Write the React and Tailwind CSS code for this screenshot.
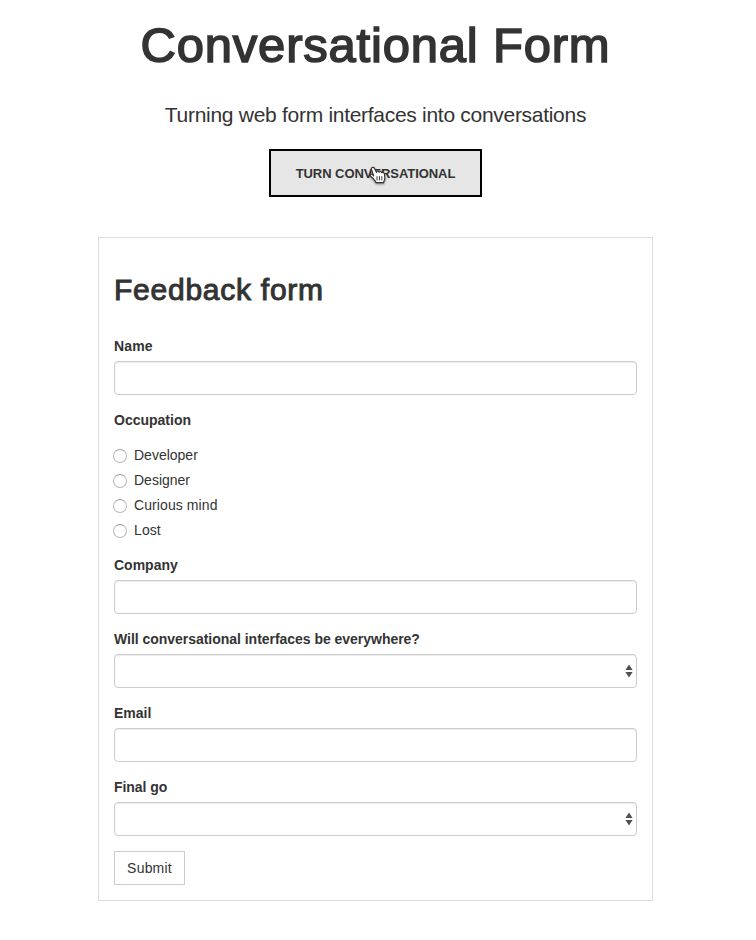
const label = "block w-fit whitespace-nowrap text-[14px] leading-5 font-bold";
const field =
  "mt-[5px] block h-[34px] w-full appearance-none rounded-[4px] border border-[#ccc] bg-white px-3 shadow-[inset_0_1px_1px_rgba(0,0,0,0.075)] outline-none";

function TextField({ name, tracking = "" }) {
  return (
    <div className="mb-[15px]">
      <label className={`${label} ${tracking}`}>{name}</label>
      <input type="text" aria-label={name} className={field} />
    </div>
  );
}

function SelectField({ name, tracking = "" }) {
  return (
    <div className="mb-[15px]">
      <label className={`${label} ${tracking}`}>{name}</label>
      <div className="relative">
        <select aria-label={name} className={field} />
        <svg className="pointer-events-none absolute top-[10px] right-[4px]" width="8" height="14" viewBox="0 0 8 14" fill="#505050">
          <path d="M4 0.5 7.6 6H.4zM.4 8h7.2L4 13.5z" />
        </svg>
      </div>
    </div>
  );
}

function Radio({ name, tracking = "" }) {
  return (
    <label className="flex h-5 items-center">
      <input
        type="radio"
        name="occupation"
        className="mt-[2px] -ml-px h-[14px] w-[14px] shrink-0 appearance-none rounded-full border border-[#b9b9b9] border-t-[#a2a2a2] bg-white"
      />
      <span className={`ml-[7px] text-[14px] leading-5 whitespace-nowrap ${tracking}`}>{name}</span>
    </label>
  );
}

function HandCursor() {
  return (
    <svg className="pointer-events-none absolute top-[14px] left-[98px] drop-shadow-[0_1px_1px_rgba(0,0,0,0.45)]" width="18" height="20" viewBox="0 0 17 19">
      <path
        d="M4.4 10.4 2.3 4.3C1.7 2.3 4.2 1.4 5.1 3.1L7 7C7.2 5.7 9 5.6 9.6 6.8 10.2 5.8 11.7 6 12 7.3 12.9 6.6 14.4 7 14.6 8.5L15 12.3C15.1 14 14 14.9 13.8 16.8H6.6C6.2 14.8 4.6 13.7 3.2 12.1 1.8 11.2 .9 10.3 1 9.2 1.6 7.9 3.3 9 4.4 10.4Z"
        fill="#fff"
        stroke="#333"
        strokeWidth="1.1"
        strokeLinejoin="round"
      />
      <path d="M7.6 10.6v4M9.9 10.6v4M12.1 10.6v4" stroke="#333" strokeWidth="0.9" />
    </svg>
  );
}

export default function App() {
  return (
    <div className="flex min-h-[940px] w-[751px] flex-col items-center bg-white font-['Liberation_Sans',Arial,sans-serif] text-[#333]">
      <h1 className="mt-[18px] text-[49px] leading-[55px] tracking-[0.8px] whitespace-nowrap [-webkit-text-stroke:1.6px_#333]">
        Conversational Form
      </h1>
      <p className="mt-[27px] text-[21px] leading-[30px] whitespace-nowrap tracking-[-0.29px]">
        Turning web form interfaces into conversations
      </p>
      <button className="relative mt-[19px] h-12 w-[213px] border-2 border-black bg-[#e6e6e6] pt-[2px] text-[13px] font-bold tracking-[-0.06px] whitespace-nowrap">
        TURN CONVERSATIONAL
        <HandCursor />
      </button>
      <form className="mt-10 ml-[98px] h-[664px] w-[555px] self-start border border-[#ddd] px-[15px]">
        <h2 className="mt-[35px] w-fit text-[30px] leading-[33px] tracking-[0.75px] whitespace-nowrap [-webkit-text-stroke:1px_#333]">Feedback form</h2>
        <div className="mt-[30px]">
          <TextField name="Name" tracking="tracking-[0.15px]" />
          <div className="mb-[15px]">
            <div className={label}>Occupation</div>
            <div className="mt-[15px] flex flex-col gap-[5px]">
              <Radio name="Developer" />
              <Radio name="Designer" />
              <Radio name="Curious mind" tracking="tracking-[0.09px]" />
              <Radio name="Lost" tracking="tracking-[0.1px]" />
            </div>
          </div>
          <TextField name="Company" />
          <SelectField name="Will conversational interfaces be everywhere?" tracking="tracking-[-0.03px]" />
          <TextField name="Email" />
          <SelectField name="Final go" tracking="tracking-[-0.05px]" />
          <button type="button" className="block h-[34px] w-[71px] border border-[#ccc] bg-white text-[14px] leading-5 tracking-[0.2px]">
            Submit
          </button>
        </div>
      </form>
    </div>
  );
}
